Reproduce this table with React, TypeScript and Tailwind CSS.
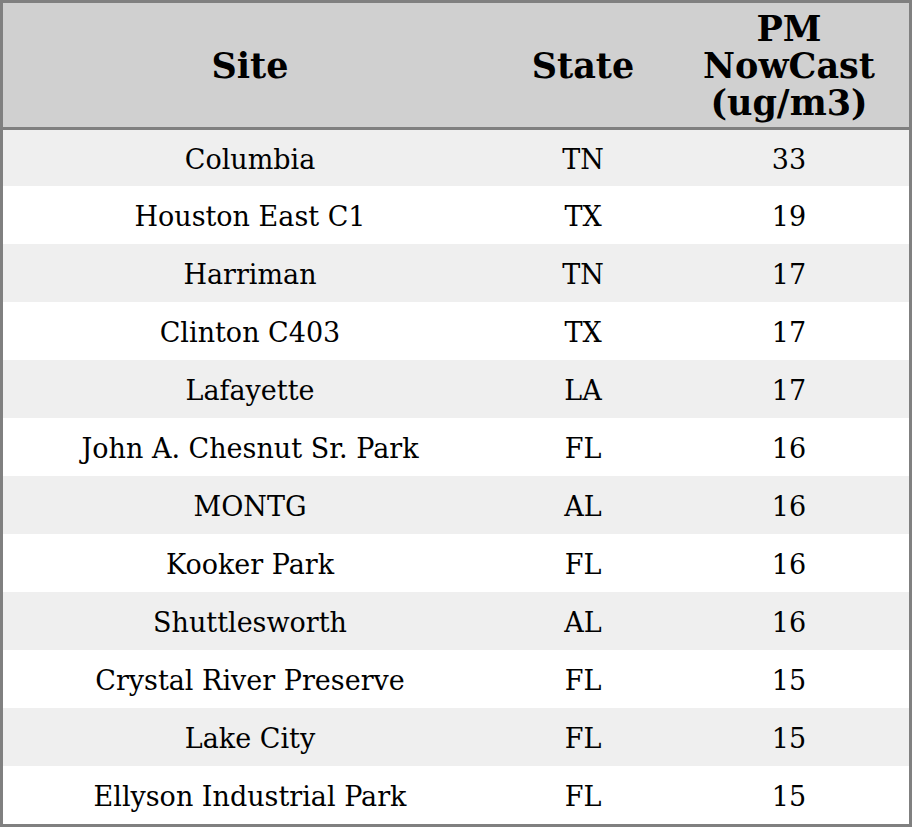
import React from "react";

const rows: [string, string, string][] = [
  ["Columbia", "TN", "33"],
  ["Houston East C1", "TX", "19"],
  ["Harriman", "TN", "17"],
  ["Clinton C403", "TX", "17"],
  ["Lafayette", "LA", "17"],
  ["John A. Chesnut Sr. Park", "FL", "16"],
  ["MONTG", "AL", "16"],
  ["Kooker Park", "FL", "16"],
  ["Shuttlesworth", "AL", "16"],
  ["Crystal River Preserve", "FL", "15"],
  ["Lake City", "FL", "15"],
  ["Ellyson Industrial Park", "FL", "15"],
];

export default function App() {
  return (
    <div
      className="w-[912px] h-[827px] border-[3px] border-[#808080] bg-white flex flex-col overflow-hidden text-black"
      style={{ fontFamily: '"DejaVu Serif", serif' }}
    >
      <div className="flex h-[124px] shrink-0 bg-[#d0d0d0] border-b-[3px] border-[#808080] box-content font-bold text-[35px] leading-[37px]">
        <div className="w-[494px] flex items-center justify-center">Site</div>
        <div className="w-[172px] flex items-center justify-center">State</div>
        <div className="w-[240px] flex items-center justify-center text-center">
          PM
          <br />
          NowCast
          <br />
          (ug/m3)
        </div>
      </div>
      <div className="flex flex-col text-[27px] leading-[32px]">
        {rows.map((r, i) => (
          <div
            key={i}
            className={`flex pt-1 ${i === 0 ? "h-[56px]" : "h-[58px]"} ${i % 2 === 0 ? "bg-[#efefef]" : "bg-white"}`}
          >
            <div className="w-[494px] flex items-center justify-center">{r[0]}</div>
            <div className="w-[172px] flex items-center justify-center">{r[1]}</div>
            <div className="w-[240px] flex items-center justify-center">{r[2]}</div>
          </div>
        ))}
      </div>
    </div>
  );
}
